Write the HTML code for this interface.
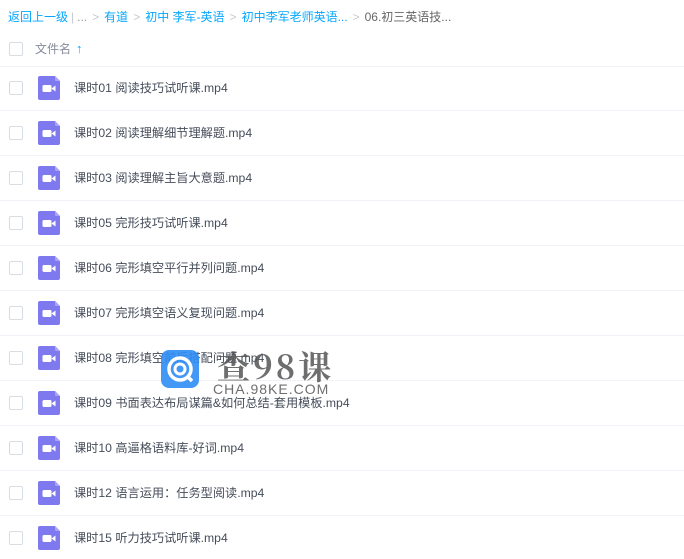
<!DOCTYPE html>
<html><head><meta charset="utf-8"><style>
*{margin:0;padding:0;box-sizing:border-box}
body{width:684px;height:559px;overflow:hidden;background:#fff;font-family:"Liberation Sans","Noto Sans CJK SC",sans-serif;position:relative}
.bc{position:absolute;left:8px;top:9px;font-size:12px;color:#06a7ff;white-space:nowrap;line-height:16px}
.bc .g{color:#c4cad3;margin:0 5px}
.bc .d{color:#666}
.cb{position:absolute;left:9px;width:14px;height:14px;border:1px solid #d8dde5;border-radius:2px;background:#fff}
.hd{position:absolute;left:35px;top:40px;font-size:12px;color:#878c9c}
.hd b{color:#06a7ff;font-weight:bold;margin-left:5px;font-size:13px}
.line{position:absolute;left:0;width:684px;height:1px;background:#f0f2f7}
.ic{position:absolute;left:38px;width:22px;height:24px}
.tx{position:absolute;left:74px;font-size:12.2px;color:#454d5a;line-height:16px;white-space:nowrap}
.wm{position:absolute;left:161px;top:350px}
</style></head><body>
<div class="bc">返回上一级<span class="g" style="margin:0 3px">|</span><span class="d" style="color:#999">...</span><span class="g">&gt;</span>有道<span class="g">&gt;</span>初中 李军-英语<span class="g">&gt;</span>初中李军老师英语...<span class="g">&gt;</span><span class="d">06.初三英语技...</span></div>
<div class="cb" style="top:42px"></div>
<div class="hd">文件名<b>↑</b></div>
<div class="line" style="top:66px"></div>
<div id="rows"></div>
<script>
var n=["课时01 阅读技巧试听课.mp4","课时02 阅读理解细节理解题.mp4","课时03 阅读理解主旨大意题.mp4","课时05 完形技巧试听课.mp4","课时06 完形填空平行并列问题.mp4","课时07 完形填空语义复现问题.mp4","课时08 完形填空前后搭配问题.mp4","课时09 书面表达布局谋篇&如何总结-套用模板.mp4","课时10 高逼格语料库-好词.mp4","课时12 语言运用：任务型阅读.mp4","课时15 听力技巧试听课.mp4"];
var h="";
for(var i=0;i<n.length;i++){var c=88+45*i;
h+='<div class="cb" style="top:'+(c-7)+'px"></div>';
h+='<svg class="ic" style="top:'+(c-12)+'px" viewBox="0 0 22 24"><path d="M2 0H17L22 5V22A2 2 0 0 1 20 24H2A2 2 0 0 1 0 22V2A2 2 0 0 1 2 0Z" fill="#7f79f0"/><path d="M17 0L22 5H18A1 1 0 0 1 17 4Z" fill="#a9a4f7"/><rect x="4.5" y="9" width="9" height="7" rx="1.5" fill="#fff"/><path d="M13.5 12.5L17.5 9.5V15.5Z" fill="#fff"/></svg>';
h+='<div class="tx" style="top:'+(c-8)+'px">'+n[i]+'</div>';
if(i<n.length-1)h+='<div class="line" style="top:'+(c+22)+'px"></div>';}
document.getElementById('rows').innerHTML=h;
</script>
<div class="wm">
<svg width="38" height="38" viewBox="0 0 38 38" style="position:absolute;left:0;top:0"><rect width="38" height="38" rx="8" fill="#2f8df5" opacity=".9"/><circle cx="19" cy="19" r="11" fill="none" stroke="#fff" stroke-width="3.5"/><circle cx="19" cy="19" r="5" fill="none" stroke="#fff" stroke-width="3"/><path d="M26 26L31 31" stroke="#fff" stroke-width="3.5"/></svg>
<div style="position:absolute;left:56px;top:-8px;font-size:33px;font-weight:bold;color:#555;opacity:.85;white-space:nowrap;letter-spacing:3px;font-family:'Noto Serif CJK SC','Noto Sans CJK SC',serif">查98课</div>
<div style="position:absolute;left:52px;top:31px;font-size:14px;color:#555;opacity:.85;white-space:nowrap;letter-spacing:1px">CHA.98KE.COM</div>
</div>
</body></html>
